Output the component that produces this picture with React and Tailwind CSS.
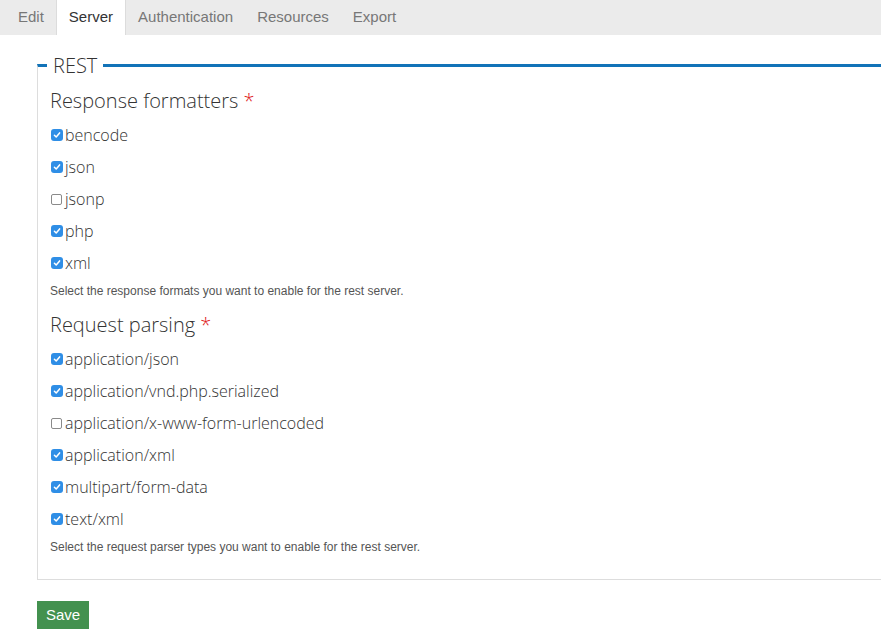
import React from 'react';

const TABS = ['Edit', 'Server', 'Authentication', 'Resources', 'Export'];

const FORMATTERS = [
  { label: 'bencode', checked: true },
  { label: 'json', checked: true },
  { label: 'jsonp', checked: false },
  { label: 'php', checked: true },
  { label: 'xml', checked: true },
];

const PARSERS = [
  { label: 'application/json', checked: true },
  { label: 'application/vnd.php.serialized', checked: true },
  { label: 'application/x-www-form-urlencoded', checked: false },
  { label: 'application/xml', checked: true },
  { label: 'multipart/form-data', checked: true },
  { label: 'text/xml', checked: true },
];

function Box({ checked }) {
  if (!checked) {
    return <span className="ml-px h-[11px] w-[11px] rounded-[2px] border border-[#8a8a8a] bg-white" />;
  }
  return (
    <span className="ml-px flex h-[12px] w-[12px] items-center justify-center rounded-[3px] bg-[#2f8ee6]">
      <svg width="8" height="8" viewBox="0 0 8 8" fill="none">
        <path d="M1.4 4.2 L3.2 6 L6.6 1.9" stroke="white" strokeWidth="1.5" strokeLinecap="round" strokeLinejoin="round" />
      </svg>
    </span>
  );
}

function Group({ title, items, help, first }) {
  return (
    <div>
      <h3 className={(first ? 'mt-[9px]' : 'mt-[11px]') + ' text-[20px] font-light leading-[28px] text-[#333]'}>
        {title} <span className="text-[#e0201b]">*</span>
      </h3>
      <div className="mt-[4px]">
        {items.map((it) => (
          <label key={it.label} className="flex h-[32px] items-center gap-[2px] text-[16px] font-light text-[#333]">
            <Box checked={it.checked} />
            <span className={it.checked ? '' : 'ml-px'}>{it.label}</span>
          </label>
        ))}
      </div>
      <p className="mt-[3px] font-['Liberation_Sans',Arial,sans-serif] text-[12px] leading-[18px] text-[#555]">{help}</p>
    </div>
  );
}

export default function App() {
  return (
    <div className="min-h-[644px] bg-white font-['Open_Sans',sans-serif]">
      <div className="flex h-[35px] bg-[#ebebeb] pl-[6px] font-['Liberation_Sans',Arial,sans-serif] text-[15px]">
        {TABS.map((t) => (
          <div
            key={t}
            className={
              t === 'Server'
                ? 'flex items-center border-x border-[#dcdcdc] bg-white px-[12px] text-[#333]'
                : 'flex items-center px-[12px] text-[#777]'
            }
          >
            {t}
          </div>
        ))}
      </div>

      <div className="pl-[37px]">
        <div className="mt-[29px] border-b border-l border-t-[3px] border-[#ddd] border-t-[#1273b8] pb-[23px]">
          <div className="-mt-[13px] ml-[9px] w-fit bg-white px-[6px] text-[20px] font-light leading-[24px] text-[#333]">REST</div>
          <div className="pl-[12px]">
            <Group first title="Response formatters" items={FORMATTERS} help="Select the response formats you want to enable for the rest server." />
            <Group title="Request parsing" items={PARSERS} help="Select the request parser types you want to enable for the rest server." />
          </div>
        </div>
        <button className="mt-[21px] h-[28px] w-[52px] bg-[#43914f] font-['Liberation_Sans',Arial,sans-serif] text-[15px] text-white">
          Save
        </button>
      </div>
    </div>
  );
}
